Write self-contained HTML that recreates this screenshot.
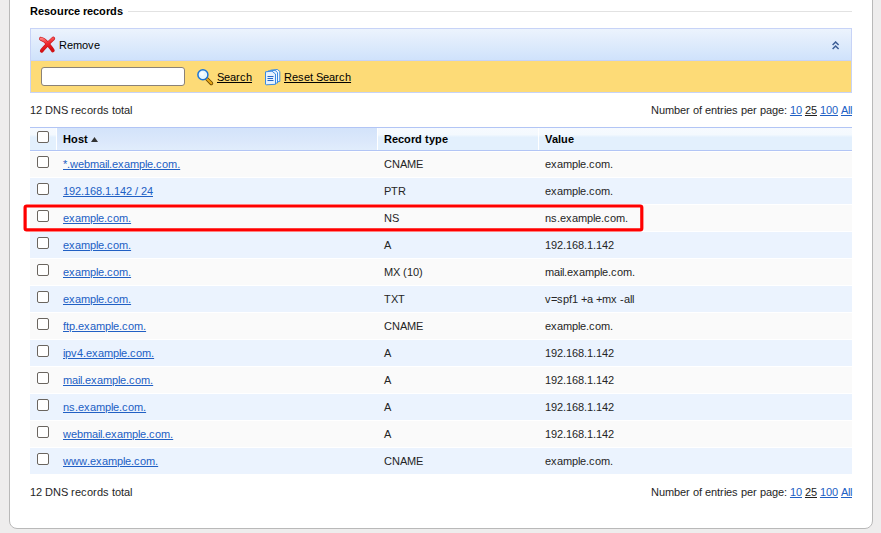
<!DOCTYPE html>
<html><head><meta charset="utf-8">
<style>
*{margin:0;padding:0;box-sizing:border-box}
html,body{width:881px;height:533px;overflow:hidden;background:#eeeded;font-family:"Liberation Sans",sans-serif;font-size:11px;color:#252525;font-kerning:none}
s{text-decoration:inherit}
.abs{position:absolute}
#panel{position:absolute;left:9px;top:-20px;width:864px;height:549px;background:#fff;border:1px solid #b9b9b9;border-radius:0 0 8px 8px}
.legend{position:absolute;left:30px;top:5px;font-weight:bold;color:#000;line-height:13px;font-size:11px}
.legline{position:absolute;left:128px;top:11px;width:724px;height:1px;background:#e2e2e2}
#tb{position:absolute;left:30px;top:28px;width:822px;height:65px;border:1px solid #c7d3f7;background:#fddb77}
#tbtop{position:absolute;left:0;top:0;width:820px;height:32px;background:linear-gradient(#ecf3fd,#cfe2fb);border-bottom:1px solid #c7d3f7}
.t{position:absolute;line-height:13px;white-space:nowrap}
a{color:#2160c4;text-decoration:underline}
.cb{position:absolute;left:7px;width:12px;height:12px;border:1px solid #6a655f;border-radius:2px;background:#fff}
#thead{position:absolute;left:30px;top:127px;width:822px;height:24px;border-top:1px solid #b2c5f5;border-bottom:1px solid #b2c5f5;background:linear-gradient(#f6faff 0,#f4f9fe 30%,#e3f0fd 42%,#e3f0fd 100%)}
#thead .hsort{position:absolute;left:27px;top:0;width:320px;height:22px;background:linear-gradient(#d3e3fa,#dbe8fb 60%,#e1edfc)}
#thead .sep{position:absolute;top:0;width:1px;height:22px;background:#fff}
#thead .t{font-weight:bold;color:#000;top:5px}
.row{position:absolute;left:30px;width:822px;height:26px}
.row.odd{background:#fafafa}
.row.even{background:#ebf3fe}
.row .t{top:7px}
.host{left:33px}
.typ{left:354px}
.val{left:515px}
.foot{position:absolute;left:30px;line-height:13px}
.pager{position:absolute;right:29px;line-height:13px;white-space:nowrap}
.pager u{text-decoration:underline;color:#222}
#hl{position:absolute;left:24px;top:204px;width:620px;height:28px;border:3px solid #f00;border-radius:4px}
.k0{letter-spacing:-0.28px}.k1{letter-spacing:-0.06px}.k2{letter-spacing:0.06px}.k3{letter-spacing:-0.12px}.k4{letter-spacing:-0.16px}.k5{letter-spacing:-0.44px}.k6{letter-spacing:0.5px}.k7{letter-spacing:-0.34px}.k8{letter-spacing:0.28px}.k9{letter-spacing:0.34px}.k10{letter-spacing:-0.42px}
</style></head><body>
<div id="panel"></div>
<div class="legend"><s class="k2">R</s><s class="k3">e</s><s class="k3">s</s><s class="k8">o</s><s class="k8">u</s><s class="k0">r</s><s class="k3">c</s><s class="k3">e</s><s class="k1"> </s><s class="k0">r</s><s class="k3">e</s><s class="k3">c</s><s class="k8">o</s><s class="k0">r</s><s class="k8">d</s><s class="k3">s</s></div>
<div class="legline"></div>
<div id="tb">
  <div id="tbtop">
    <svg class="abs" style="left:5px;top:5px" width="22" height="22" viewBox="0 0 22 22"><defs><linearGradient id="xg" x1="0" y1="0" x2="0.3" y2="1"><stop offset="0" stop-color="#ff7d7d"/><stop offset="0.5" stop-color="#f0282d"/><stop offset="1" stop-color="#d40f12"/></linearGradient></defs><path d="M5 4.8 C7.5 5.5 10 7.5 11.8 10 C13.8 12.5 15.6 14.5 16.8 16.4 M17.2 4.6 C15 6.5 12.2 9.3 10.2 11.8 C8.2 14 6.8 15.3 5.8 16.8" fill="none" stroke="#c8161a" stroke-width="3.8" stroke-linecap="round"/><path d="M5 4.8 C7.5 5.5 10 7.5 11.8 10 C13.8 12.5 15.6 14.5 16.8 16.4 M17.2 4.6 C15 6.5 12.2 9.3 10.2 11.8 C8.2 14 6.8 15.3 5.8 16.8" fill="none" stroke="url(#xg)" stroke-width="2.6" stroke-linecap="round"/></svg>
    <span class="t" style="left:28px;top:10px;color:#000"><s class="k2">R</s><s class="k3">e</s><s class="k4">m</s><s class="k3">o</s><s class="k6">v</s><s class="k3">e</s></span>
    <svg class="abs" style="left:801px;top:12px" width="8" height="9" viewBox="0 0 8 9"><path d="M0.6 4 L3.6 1 L6.6 4 M0.6 8 L3.6 5 L6.6 8" fill="none" stroke="#3d5e96" stroke-width="1.5"/></svg>
  </div>
  <div class="abs" style="left:10px;top:38px;width:144px;height:19px;background:#fff;border:1px solid #8a8278;border-radius:3px"></div>
  <svg class="abs" style="left:166px;top:40px" width="17" height="17" viewBox="0 0 17 17"><path d="M10 10 L14.3 14.3" stroke="#6a4500" stroke-width="3.8" stroke-linecap="round"/><path d="M10 10 L14.3 14.3" stroke="#e8a818" stroke-width="2.2" stroke-linecap="round"/><circle cx="5.9" cy="5.8" r="5" fill="#e6f7fe" stroke="#1b74d6" stroke-width="1.5"/><circle cx="5" cy="4.8" r="2" fill="#fff" opacity="0.7"/></svg>
  <a class="t" style="left:186px;top:42px;color:#000"><s class="k7">S</s><s class="k3">e</s><s class="k3">a</s><s class="k9">r</s><s class="k6">c</s><s class="k3">h</s></a>
  <svg class="abs" style="left:234px;top:40px" width="16" height="17" viewBox="0 0 16 17"><path d="M5.5 1.2 L12.5 0.5 L14.8 2.5 L14.8 12.5 L8 13.2 Z" fill="#eef6fe" stroke="#3a8ae2" stroke-linejoin="round"/><path d="M3 2 L10 1.3 L12.5 3.5 L12.5 14 L6 14.5 Z" fill="#eef6fe" stroke="#3a8ae2" stroke-linejoin="round"/><path d="M0.5 2.8 L7 2.2 L10.5 5 L10.5 15.3 L1.5 15.8 Q0.5 15.8 0.5 15 Z" fill="#e6f2fe" stroke="#3a8ae2" stroke-linejoin="round"/><path d="M2.5 7.5 H8.5 M2.5 9.5 H8 M2.5 11.5 H8.5" stroke="#2466c8"/></svg>
  <a class="t" style="left:253px;top:42px;color:#000"><s class="k2">R</s><s class="k3">e</s><s class="k6">s</s><s class="k3">e</s><s class="k1">t</s><s class="k1"> </s><s class="k7">S</s><s class="k3">e</s><s class="k3">a</s><s class="k9">r</s><s class="k6">c</s><s class="k3">h</s></a>
</div>
<div class="foot" style="top:104px"><s class="k3">1</s><s class="k3">2</s><s class="k1"> </s><s class="k2">D</s><s class="k2">N</s><s class="k7">S</s><s class="k1"> </s><s class="k9">r</s><s class="k3">e</s><s class="k6">c</s><s class="k3">o</s><s class="k9">r</s><s class="k3">d</s><s class="k6">s</s><s class="k1"> </s><s class="k1">t</s><s class="k3">o</s><s class="k1">t</s><s class="k3">a</s><s class="k5">l</s></div>
<div class="pager" style="top:104px"><s class="k2">N</s><s class="k3">u</s><s class="k4">m</s><s class="k3">b</s><s class="k3">e</s><s class="k9">r</s><s class="k1"> </s><s class="k3">o</s><s class="k1">f</s><s class="k1"> </s><s class="k3">e</s><s class="k3">n</s><s class="k1">t</s><s class="k9">r</s><s class="k5">i</s><s class="k3">e</s><s class="k6">s</s><s class="k1"> </s><s class="k3">p</s><s class="k3">e</s><s class="k9">r</s><s class="k1"> </s><s class="k3">p</s><s class="k3">a</s><s class="k3">g</s><s class="k3">e</s><s class="k1">:</s><s class="k1"> </s><a><s class="k3">1</s><s class="k3">0</s></a><s class="k1"> </s><u><s class="k3">2</s><s class="k3">5</s></u><s class="k1"> </s><a><s class="k3">1</s><s class="k3">0</s><s class="k3">0</s></a><s class="k1"> </s><a><s class="k7">A</s><s class="k5">l</s><s class="k5">l</s></a></div>
<div id="thead">
  <div class="hsort"></div>
  <div class="sep" style="left:26px"></div>
  <div class="sep" style="left:347px"></div>
  <div class="sep" style="left:508px"></div>
  <i class="cb" style="top:3px"></i>
  <span class="t" style="left:33px"><s class="k2">H</s><s class="k8">o</s><s class="k3">s</s><s class="k9">t</s></span><svg class="abs" style="left:61px;top:9px" width="7" height="5" viewBox="0 0 7 5"><path d="M3.5 0 L7 5 L0 5 Z" fill="#333"/></svg>
  <span class="t" style="left:354px"><s class="k2">R</s><s class="k3">e</s><s class="k3">c</s><s class="k8">o</s><s class="k0">r</s><s class="k8">d</s><s class="k1"> </s><s class="k9">t</s><s class="k3">y</s><s class="k8">p</s><s class="k3">e</s></span>
  <span class="t" style="left:515px"><s class="k7">V</s><s class="k3">a</s><s class="k1">l</s><s class="k8">u</s><s class="k3">e</s></span>
</div>
<div class="abs" style="left:30px;top:151px;width:822px;height:1px;background:#fff;z-index:2"></div>
<div class="row odd" style="top:151px"><i class="cb" style="top:5px"></i><a class="t host"><s class="k0">*</s><s class="k1">.</s><s class="k2">w</s><s class="k3">e</s><s class="k3">b</s><s class="k4">m</s><s class="k3">a</s><s class="k5">i</s><s class="k5">l</s><s class="k1">.</s><s class="k3">e</s><s class="k6">x</s><s class="k3">a</s><s class="k4">m</s><s class="k3">p</s><s class="k5">l</s><s class="k3">e</s><s class="k1">.</s><s class="k6">c</s><s class="k3">o</s><s class="k4">m</s><s class="k1">.</s></a><span class="t typ"><s class="k2">C</s><s class="k2">N</s><s class="k7">A</s><s class="k4">M</s><s class="k7">E</s></span><span class="t val"><s class="k3">e</s><s class="k6">x</s><s class="k3">a</s><s class="k4">m</s><s class="k3">p</s><s class="k5">l</s><s class="k3">e</s><s class="k1">.</s><s class="k6">c</s><s class="k3">o</s><s class="k4">m</s><s class="k1">.</s></span></div>
<div class="row even" style="top:178px"><i class="cb" style="top:5px"></i><a class="t host"><s class="k3">1</s><s class="k3">9</s><s class="k3">2</s><s class="k1">.</s><s class="k3">1</s><s class="k3">6</s><s class="k3">8</s><s class="k1">.</s><s class="k3">1</s><s class="k1">.</s><s class="k3">1</s><s class="k3">4</s><s class="k3">2</s><s class="k1"> </s><s class="k1">/</s><s class="k1"> </s><s class="k3">2</s><s class="k3">4</s></a><span class="t typ"><s class="k7">P</s><s class="k8">T</s><s class="k2">R</s></span><span class="t val"><s class="k3">e</s><s class="k6">x</s><s class="k3">a</s><s class="k4">m</s><s class="k3">p</s><s class="k5">l</s><s class="k3">e</s><s class="k1">.</s><s class="k6">c</s><s class="k3">o</s><s class="k4">m</s><s class="k1">.</s></span></div>
<div class="row odd" style="top:205px"><i class="cb" style="top:5px"></i><a class="t host"><s class="k3">e</s><s class="k6">x</s><s class="k3">a</s><s class="k4">m</s><s class="k3">p</s><s class="k5">l</s><s class="k3">e</s><s class="k1">.</s><s class="k6">c</s><s class="k3">o</s><s class="k4">m</s><s class="k1">.</s></a><span class="t typ"><s class="k2">N</s><s class="k7">S</s></span><span class="t val"><s class="k3">n</s><s class="k6">s</s><s class="k1">.</s><s class="k3">e</s><s class="k6">x</s><s class="k3">a</s><s class="k4">m</s><s class="k3">p</s><s class="k5">l</s><s class="k3">e</s><s class="k1">.</s><s class="k6">c</s><s class="k3">o</s><s class="k4">m</s><s class="k1">.</s></span></div>
<div class="row even" style="top:232px"><i class="cb" style="top:5px"></i><a class="t host"><s class="k3">e</s><s class="k6">x</s><s class="k3">a</s><s class="k4">m</s><s class="k3">p</s><s class="k5">l</s><s class="k3">e</s><s class="k1">.</s><s class="k6">c</s><s class="k3">o</s><s class="k4">m</s><s class="k1">.</s></a><span class="t typ"><s class="k7">A</s></span><span class="t val"><s class="k3">1</s><s class="k3">9</s><s class="k3">2</s><s class="k1">.</s><s class="k3">1</s><s class="k3">6</s><s class="k3">8</s><s class="k1">.</s><s class="k3">1</s><s class="k1">.</s><s class="k3">1</s><s class="k3">4</s><s class="k3">2</s></span></div>
<div class="row odd" style="top:259px"><i class="cb" style="top:5px"></i><a class="t host"><s class="k3">e</s><s class="k6">x</s><s class="k3">a</s><s class="k4">m</s><s class="k3">p</s><s class="k5">l</s><s class="k3">e</s><s class="k1">.</s><s class="k6">c</s><s class="k3">o</s><s class="k4">m</s><s class="k1">.</s></a><span class="t typ"><s class="k4">M</s><s class="k7">X</s><s class="k1"> </s><s class="k9">(</s><s class="k3">1</s><s class="k3">0</s><s class="k9">)</s></span><span class="t val"><s class="k4">m</s><s class="k3">a</s><s class="k5">i</s><s class="k5">l</s><s class="k1">.</s><s class="k3">e</s><s class="k6">x</s><s class="k3">a</s><s class="k4">m</s><s class="k3">p</s><s class="k5">l</s><s class="k3">e</s><s class="k1">.</s><s class="k6">c</s><s class="k3">o</s><s class="k4">m</s><s class="k1">.</s></span></div>
<div class="row even" style="top:286px"><i class="cb" style="top:5px"></i><a class="t host"><s class="k3">e</s><s class="k6">x</s><s class="k3">a</s><s class="k4">m</s><s class="k3">p</s><s class="k5">l</s><s class="k3">e</s><s class="k1">.</s><s class="k6">c</s><s class="k3">o</s><s class="k4">m</s><s class="k1">.</s></a><span class="t typ"><s class="k8">T</s><s class="k7">X</s><s class="k8">T</s></span><span class="t val"><s class="k6">v</s><s class="k10">=</s><s class="k6">s</s><s class="k3">p</s><s class="k1">f</s><s class="k3">1</s><s class="k1"> </s><s class="k10">+</s><s class="k3">a</s><s class="k1"> </s><s class="k10">+</s><s class="k4">m</s><s class="k6">x</s><s class="k1"> </s><s class="k9">-</s><s class="k3">a</s><s class="k5">l</s><s class="k5">l</s></span></div>
<div class="row odd" style="top:313px"><i class="cb" style="top:5px"></i><a class="t host"><s class="k1">f</s><s class="k1">t</s><s class="k3">p</s><s class="k1">.</s><s class="k3">e</s><s class="k6">x</s><s class="k3">a</s><s class="k4">m</s><s class="k3">p</s><s class="k5">l</s><s class="k3">e</s><s class="k1">.</s><s class="k6">c</s><s class="k3">o</s><s class="k4">m</s><s class="k1">.</s></a><span class="t typ"><s class="k2">C</s><s class="k2">N</s><s class="k7">A</s><s class="k4">M</s><s class="k7">E</s></span><span class="t val"><s class="k3">e</s><s class="k6">x</s><s class="k3">a</s><s class="k4">m</s><s class="k3">p</s><s class="k5">l</s><s class="k3">e</s><s class="k1">.</s><s class="k6">c</s><s class="k3">o</s><s class="k4">m</s><s class="k1">.</s></span></div>
<div class="row even" style="top:340px"><i class="cb" style="top:5px"></i><a class="t host"><s class="k5">i</s><s class="k3">p</s><s class="k6">v</s><s class="k3">4</s><s class="k1">.</s><s class="k3">e</s><s class="k6">x</s><s class="k3">a</s><s class="k4">m</s><s class="k3">p</s><s class="k5">l</s><s class="k3">e</s><s class="k1">.</s><s class="k6">c</s><s class="k3">o</s><s class="k4">m</s><s class="k1">.</s></a><span class="t typ"><s class="k7">A</s></span><span class="t val"><s class="k3">1</s><s class="k3">9</s><s class="k3">2</s><s class="k1">.</s><s class="k3">1</s><s class="k3">6</s><s class="k3">8</s><s class="k1">.</s><s class="k3">1</s><s class="k1">.</s><s class="k3">1</s><s class="k3">4</s><s class="k3">2</s></span></div>
<div class="row odd" style="top:367px"><i class="cb" style="top:5px"></i><a class="t host"><s class="k4">m</s><s class="k3">a</s><s class="k5">i</s><s class="k5">l</s><s class="k1">.</s><s class="k3">e</s><s class="k6">x</s><s class="k3">a</s><s class="k4">m</s><s class="k3">p</s><s class="k5">l</s><s class="k3">e</s><s class="k1">.</s><s class="k6">c</s><s class="k3">o</s><s class="k4">m</s><s class="k1">.</s></a><span class="t typ"><s class="k7">A</s></span><span class="t val"><s class="k3">1</s><s class="k3">9</s><s class="k3">2</s><s class="k1">.</s><s class="k3">1</s><s class="k3">6</s><s class="k3">8</s><s class="k1">.</s><s class="k3">1</s><s class="k1">.</s><s class="k3">1</s><s class="k3">4</s><s class="k3">2</s></span></div>
<div class="row even" style="top:394px"><i class="cb" style="top:5px"></i><a class="t host"><s class="k3">n</s><s class="k6">s</s><s class="k1">.</s><s class="k3">e</s><s class="k6">x</s><s class="k3">a</s><s class="k4">m</s><s class="k3">p</s><s class="k5">l</s><s class="k3">e</s><s class="k1">.</s><s class="k6">c</s><s class="k3">o</s><s class="k4">m</s><s class="k1">.</s></a><span class="t typ"><s class="k7">A</s></span><span class="t val"><s class="k3">1</s><s class="k3">9</s><s class="k3">2</s><s class="k1">.</s><s class="k3">1</s><s class="k3">6</s><s class="k3">8</s><s class="k1">.</s><s class="k3">1</s><s class="k1">.</s><s class="k3">1</s><s class="k3">4</s><s class="k3">2</s></span></div>
<div class="row odd" style="top:421px"><i class="cb" style="top:5px"></i><a class="t host"><s class="k2">w</s><s class="k3">e</s><s class="k3">b</s><s class="k4">m</s><s class="k3">a</s><s class="k5">i</s><s class="k5">l</s><s class="k1">.</s><s class="k3">e</s><s class="k6">x</s><s class="k3">a</s><s class="k4">m</s><s class="k3">p</s><s class="k5">l</s><s class="k3">e</s><s class="k1">.</s><s class="k6">c</s><s class="k3">o</s><s class="k4">m</s><s class="k1">.</s></a><span class="t typ"><s class="k7">A</s></span><span class="t val"><s class="k3">1</s><s class="k3">9</s><s class="k3">2</s><s class="k1">.</s><s class="k3">1</s><s class="k3">6</s><s class="k3">8</s><s class="k1">.</s><s class="k3">1</s><s class="k1">.</s><s class="k3">1</s><s class="k3">4</s><s class="k3">2</s></span></div>
<div class="row even" style="top:448px"><i class="cb" style="top:5px"></i><a class="t host"><s class="k2">w</s><s class="k2">w</s><s class="k2">w</s><s class="k1">.</s><s class="k3">e</s><s class="k6">x</s><s class="k3">a</s><s class="k4">m</s><s class="k3">p</s><s class="k5">l</s><s class="k3">e</s><s class="k1">.</s><s class="k6">c</s><s class="k3">o</s><s class="k4">m</s><s class="k1">.</s></a><span class="t typ"><s class="k2">C</s><s class="k2">N</s><s class="k7">A</s><s class="k4">M</s><s class="k7">E</s></span><span class="t val"><s class="k3">e</s><s class="k6">x</s><s class="k3">a</s><s class="k4">m</s><s class="k3">p</s><s class="k5">l</s><s class="k3">e</s><s class="k1">.</s><s class="k6">c</s><s class="k3">o</s><s class="k4">m</s><s class="k1">.</s></span></div>
<svg class="abs" style="left:0;top:0;z-index:5" width="881" height="533"><rect x="25.1" y="206" width="616.7" height="23.8" rx="1.6" fill="none" stroke="#ff0000" stroke-width="3.2"/></svg>
<div class="foot" style="top:486px"><s class="k3">1</s><s class="k3">2</s><s class="k1"> </s><s class="k2">D</s><s class="k2">N</s><s class="k7">S</s><s class="k1"> </s><s class="k9">r</s><s class="k3">e</s><s class="k6">c</s><s class="k3">o</s><s class="k9">r</s><s class="k3">d</s><s class="k6">s</s><s class="k1"> </s><s class="k1">t</s><s class="k3">o</s><s class="k1">t</s><s class="k3">a</s><s class="k5">l</s></div>
<div class="pager" style="top:486px"><s class="k2">N</s><s class="k3">u</s><s class="k4">m</s><s class="k3">b</s><s class="k3">e</s><s class="k9">r</s><s class="k1"> </s><s class="k3">o</s><s class="k1">f</s><s class="k1"> </s><s class="k3">e</s><s class="k3">n</s><s class="k1">t</s><s class="k9">r</s><s class="k5">i</s><s class="k3">e</s><s class="k6">s</s><s class="k1"> </s><s class="k3">p</s><s class="k3">e</s><s class="k9">r</s><s class="k1"> </s><s class="k3">p</s><s class="k3">a</s><s class="k3">g</s><s class="k3">e</s><s class="k1">:</s><s class="k1"> </s><a><s class="k3">1</s><s class="k3">0</s></a><s class="k1"> </s><u><s class="k3">2</s><s class="k3">5</s></u><s class="k1"> </s><a><s class="k3">1</s><s class="k3">0</s><s class="k3">0</s></a><s class="k1"> </s><a><s class="k7">A</s><s class="k5">l</s><s class="k5">l</s></a></div>
</body></html>
